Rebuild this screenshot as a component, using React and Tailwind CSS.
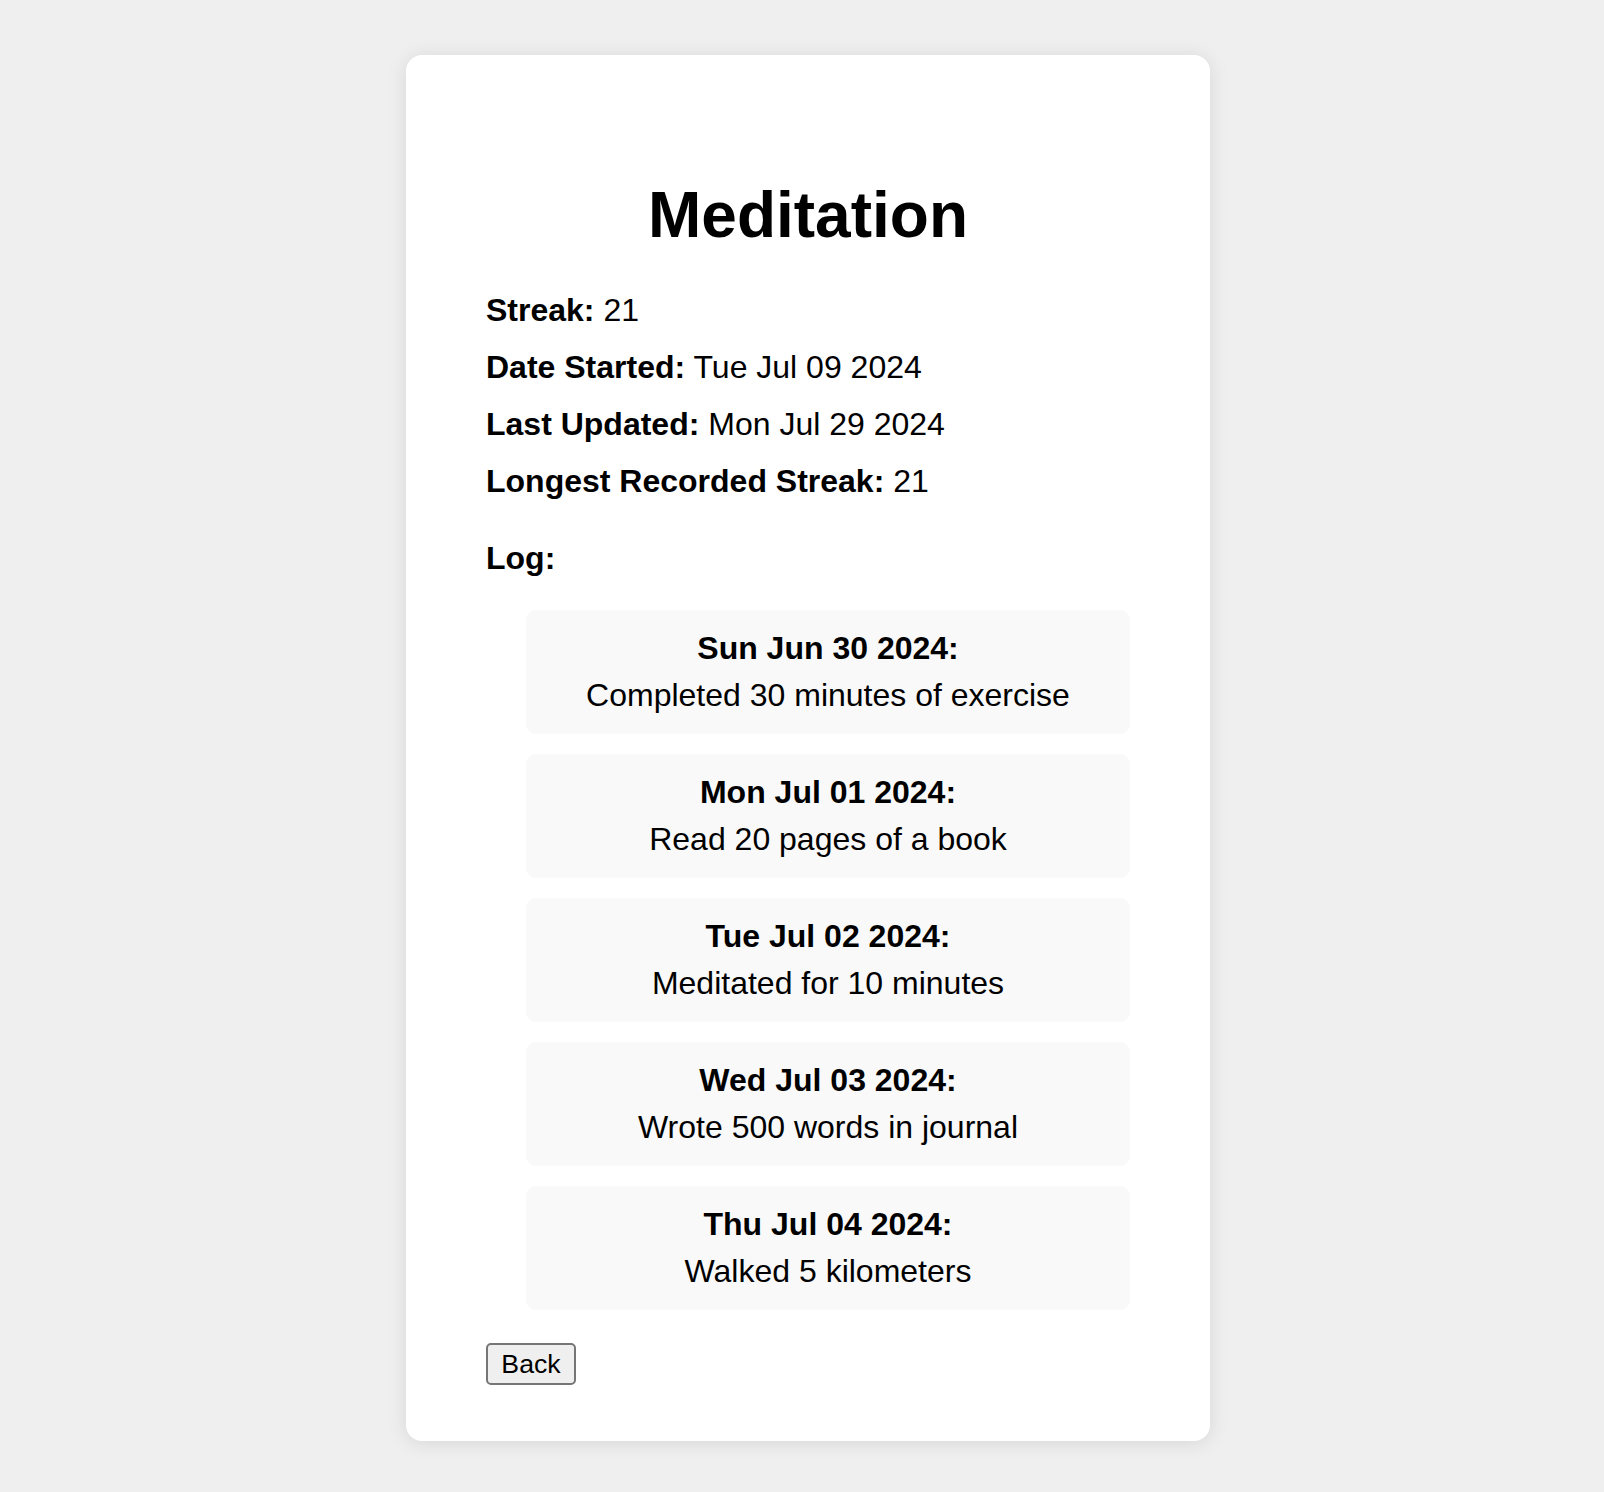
const habit = {
    name: "Meditation",
    streak: 21,
    dateStarted: "Tue Jul 09 2024",
    lastUpdated: "Mon Jul 29 2024",
    longestStreak: 21,
    log: [
        { date: "Sun Jun 30 2024", entry: "Completed 30 minutes of exercise" },
        { date: "Mon Jul 01 2024", entry: "Read 20 pages of a book" },
        { date: "Tue Jul 02 2024", entry: "Meditated for 10 minutes" },
        { date: "Wed Jul 03 2024", entry: "Wrote 500 words in journal" },
        { date: "Thu Jul 04 2024", entry: "Walked 5 kilometers" },
    ],
};

function Stat({ label, value }) {
    return (
        <p className="leading-[36.8px]">
            <span className="font-bold">{label}:</span> {value}
        </p>
    );
}

export default function App() {
    return (
        <div
            className="min-h-screen bg-[#efefef] flex justify-center pt-[55px] pb-[53px] pl-[12px] text-black"
            style={{ fontFamily: '"Liberation Sans", Arial, sans-serif' }}
        >
            <div className="w-[804px] bg-white rounded-[16px] shadow-[0_2px_20px_rgba(0,0,0,0.1)] pt-[124px] pb-[56px] px-[80px]">
                <h1 className="text-[64px] font-bold leading-[73.6px] text-center">{habit.name}</h1>

                <div className="mt-[39px] flex flex-col gap-[20.5px] text-[32px]">
                    <Stat label="Streak" value={habit.streak} />
                    <Stat label="Date Started" value={habit.dateStarted} />
                    <Stat label="Last Updated" value={habit.lastUpdated} />
                    <Stat label="Longest Recorded Streak" value={habit.longestStreak} />
                </div>

                <h3 className="mt-[40px] text-[32px] font-bold leading-[36.8px]">Log:</h3>

                <ul className="mt-[33px] pl-[40px] flex flex-col gap-[20.5px] text-[32px]">
                    {habit.log.map((item, index) => (
                        <li
                            key={index}
                            className="bg-[#f9f9f9] rounded-[10px] py-[20px] flex flex-col gap-[10px] items-center text-center"
                        >
                            <strong className="leading-[36.8px]">{item.date}:</strong>
                            <span className="leading-[36.8px]">{item.entry}</span>
                        </li>
                    ))}
                </ul>

                <button className="mt-[33px] w-[90px] h-[42px] border-2 border-[#767676] rounded-[5px] bg-[#efefef] text-[26.67px] leading-none">
                    Back
                </button>
            </div>
        </div>
    );
}
